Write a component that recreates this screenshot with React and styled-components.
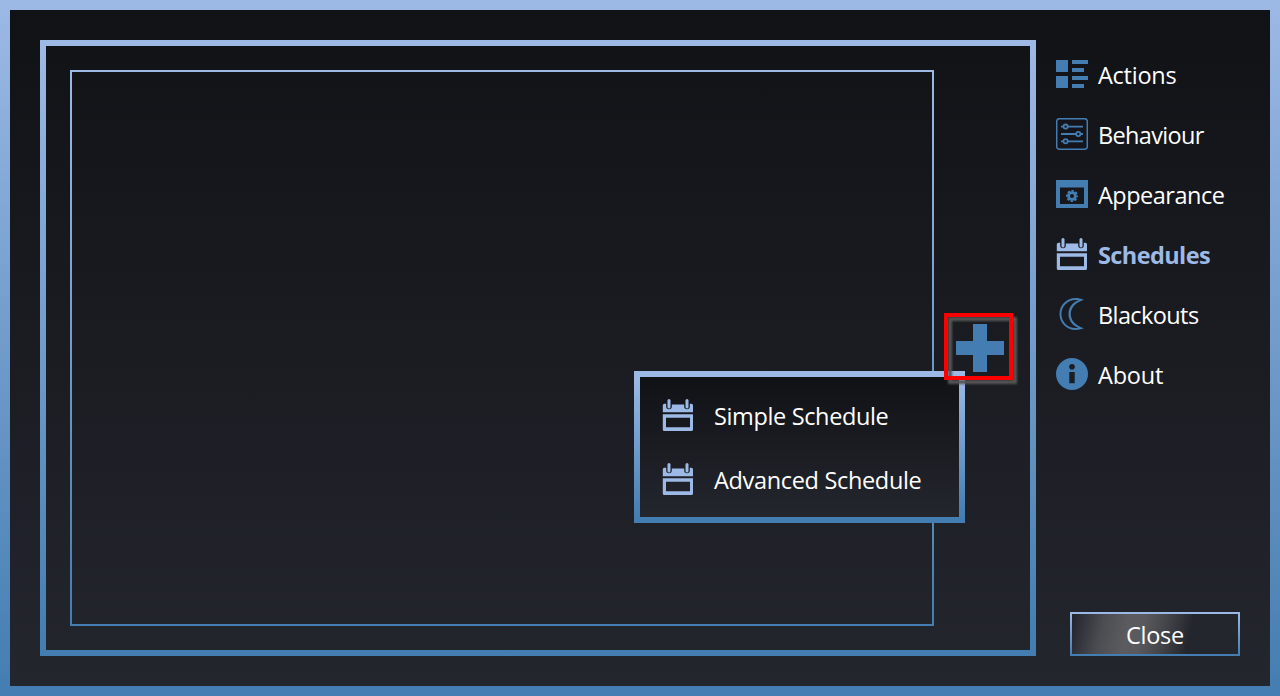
import React from "react";
import styled, { createGlobalStyle } from "styled-components";

const LIGHT = "#9db9e5";
const BLUE = "#437db1";
const EDGE = `linear-gradient(180deg, ${LIGHT}, ${BLUE})`;
const SURFACE = "linear-gradient(180deg, #111216, #24262e)";

const GlobalStyle = createGlobalStyle`
  * { box-sizing: border-box; }
  body { margin: 0; overflow: hidden; font-family: "Open Sans", "Noto Sans", sans-serif; }
  button { font: inherit; }
`;

const Window = styled.div`
  height: 696px;
  padding: 10px;
  background: ${EDGE};
  color: #fff;
  font-size: 23.5px;
`;

const Surface = styled.div`
  height: 100%;
  padding: 30px;
  display: flex;
  gap: 20px;
  background: ${SURFACE};
`;

const Panel = styled.main`
  position: relative;
  width: 996px;
  flex: none;
  padding: 24px 20px 24px 24px;
  display: flex;
  align-items: center;
  justify-content: space-between;
  border: 6px solid;
  border-image: ${EDGE} 1;
`;

const ScheduleList = styled.section`
  width: 864px;
  align-self: stretch;
  border: 2px solid;
  border-image: ${EDGE} 1;
`;

const AddButton = styled.button`
  width: 48px;
  height: 48px;
  margin-right: 6px;
  padding: 0;
  border: 0;
  background: none;
  color: ${BLUE};
  svg { display: block; }
`;

const Highlight = styled.div`
  position: absolute;
  left: 898px;
  top: 267px;
  width: 69px;
  height: 67px;
  border: 4px solid #ff0000;
  filter: drop-shadow(4px 4px 1px #565656);
`;

const Menu = styled.div`
  position: absolute;
  left: 588px;
  top: 325px;
  width: 331px;
  height: 152px;
  padding: 6px 22px 12px;
  border: 6px solid;
  border-image: ${EDGE} 1;
  background: ${SURFACE};
`;

const MenuItem = styled.div`
  height: 64px;
  display: flex;
  align-items: center;
  gap: 20px;
  color: ${LIGHT};
`;

const Sidebar = styled.aside`
  flex: 1;
  display: flex;
  flex-direction: column;
  justify-content: space-between;
`;

const Nav = styled.nav`
  padding-top: 4px;
`;

const NavItem = styled.div`
  height: 60px;
  display: flex;
  align-items: center;
  gap: 10px;
  color: ${(p) => (p.$active ? LIGHT : BLUE)};
  font-weight: ${(p) => (p.$active ? 700 : 400)};
`;

const Label = styled.span`
  padding-top: 1px;
  line-height: 30px;
  white-space: nowrap;
  letter-spacing: ${(p) => p.$track || 0}px;
  color: ${(p) => (p.$accent ? LIGHT : "#fff")};
`;

const Icon = styled.svg`
  display: block;
  flex: none;
  width: 32px;
  height: 32px;
`;

const CloseButton = styled.button`
  width: 170px;
  height: 44px;
  margin-left: 14px;
  padding: 0;
  display: flex;
  justify-content: center;
  align-items: center;
  border: 2px solid;
  border-image: ${EDGE} 1;
  color: #fff;
  background: linear-gradient(103deg, #24262e 1%, #4c4d52 19%, #5c5c60 34%, #5a5a5e 42%, #46474b 54%, #24262e 70%);
`;

const ActionsIcon = () => (
  <Icon viewBox="0 0 32 32" fill="currentColor">
    <path d="M0 2h12v12H0zM0 18h12v12H0zM16 2h16v4H16zM16 10h12v4H16zM16 18h16v4H16zM16 26h12v4H16z" />
  </Icon>
);

const BehaviourIcon = () => (
  <Icon viewBox="0 0 32 32" fill="none" stroke="currentColor" strokeWidth="1.5">
    <rect x="0.7" y="0.7" width="30.6" height="30.6" rx="2.8" />
    <g strokeWidth="1.8">
      <path d="M5 8.6h2.4M11.8 8.6H27M5 16h15M24.5 16H27M5 23.3h2.4M11.8 23.3H27" />
      <circle cx="9.6" cy="8.6" r="2.1" />
      <circle cx="22.3" cy="16" r="2.1" />
      <circle cx="9.6" cy="23.3" r="2.1" />
    </g>
  </Icon>
);

const AppearanceIcon = () => (
  <Icon viewBox="0 0 32 32" fill="currentColor">
    <path fillRule="evenodd" d="M0 2h32v28H0zM4 9.5h24V26H4z" />
    <circle cx="16" cy="18" r="3.4" fill="none" stroke="currentColor" strokeWidth="2.8" />
    <circle cx="16" cy="18" r="5.1" fill="none" stroke="currentColor" strokeWidth="1.8" strokeDasharray="2.4 1.606" strokeDashoffset="1.2" />
  </Icon>
);

const CalendarIcon = () => (
  <Icon viewBox="0 0 32 32" fill="currentColor">
    <path d="M.8 13.3V6.2q0-1.5 1.7-1.5h1.7V7.5a2.8 2.8 0 0 0 5.6 0V5.5h12.4v2a2.8 2.8 0 0 0 5.6 0V4.7h1.6q1.6 0 1.6 1.5v7.1z" />
    <rect x="5.5" y="0" width="3" height="9.4" rx="1.5" />
    <rect x="23.5" y="0" width="3" height="9.4" rx="1.5" />
    <path fillRule="evenodd" d="M.8 15.2H31v15.3q0 1.5-1.5 1.5H2.3Q.8 32 .8 30.5zM4 18.7h24v9.6H4z" />
  </Icon>
);

const MoonIcon = () => (
  <Icon viewBox="0 0 32 32" fill="currentColor">
    <path
      fillRule="evenodd"
      d="M28 1.7C24.6.5 22.5 0 19.6 0C10.5 0 3.5 7.2 3.5 16S10.5 32 19.6 32C22.5 32 24.6 31.5 28 30.3C19.5 27.5 14.8 22.5 14.8 16S19.5 4.5 28 1.7zM22.4 2.1C16 4.8 12.5 10 12.5 16S16 27.2 22.4 29.9C12.8 31.4 5.4 24.5 5.4 16S12.8.6 22.4 2.1z"
    />
  </Icon>
);

const InfoIcon = () => (
  <Icon viewBox="0 0 32 32" fill="currentColor">
    <path fillRule="evenodd" d="M16 0a16 16 0 1 0 0 32a16 16 0 1 0 0-32zM16 5.9a2.8 2.8 0 1 1 0 5.6a2.8 2.8 0 1 1 0-5.6zM13.3 14h5.4v11.2h-5.4z" />
  </Icon>
);

const PAGES = [
  { label: "Actions", icon: ActionsIcon, track: -0.25 },
  { label: "Behaviour", icon: BehaviourIcon, track: -0.65 },
  { label: "Appearance", icon: AppearanceIcon, track: -0.5 },
  { label: "Schedules", icon: CalendarIcon, active: true, track: -0.6 },
  { label: "Blackouts", icon: MoonIcon, track: -0.6 },
  { label: "About", icon: InfoIcon, track: -0.2 },
];

export default function App() {
  return (
    <Window>
      <GlobalStyle />
      <Surface>
        <Panel>
          <ScheduleList />
          <AddButton aria-label="Add schedule">
            <svg width="48" height="48" fill="currentColor">
              <path d="M17 0h14v17h17v14H31v17H17V31H0V17h17z" />
            </svg>
          </AddButton>
          <Menu>
            <MenuItem>
              <CalendarIcon />
              <Label $track={-0.36}>Simple Schedule</Label>
            </MenuItem>
            <MenuItem>
              <CalendarIcon />
              <Label $track={-0.33}>Advanced Schedule</Label>
            </MenuItem>
          </Menu>
          <Highlight />
        </Panel>
        <Sidebar>
          <Nav>
            {PAGES.map(({ label, icon: Glyph, active, track }) => (
              <NavItem key={label} $active={active}>
                <Glyph />
                <Label $accent={active} $track={track}>{label}</Label>
              </NavItem>
            ))}
          </Nav>
          <CloseButton>
            <Label $track={-0.3}>Close</Label>
          </CloseButton>
        </Sidebar>
      </Surface>
    </Window>
  );
}
